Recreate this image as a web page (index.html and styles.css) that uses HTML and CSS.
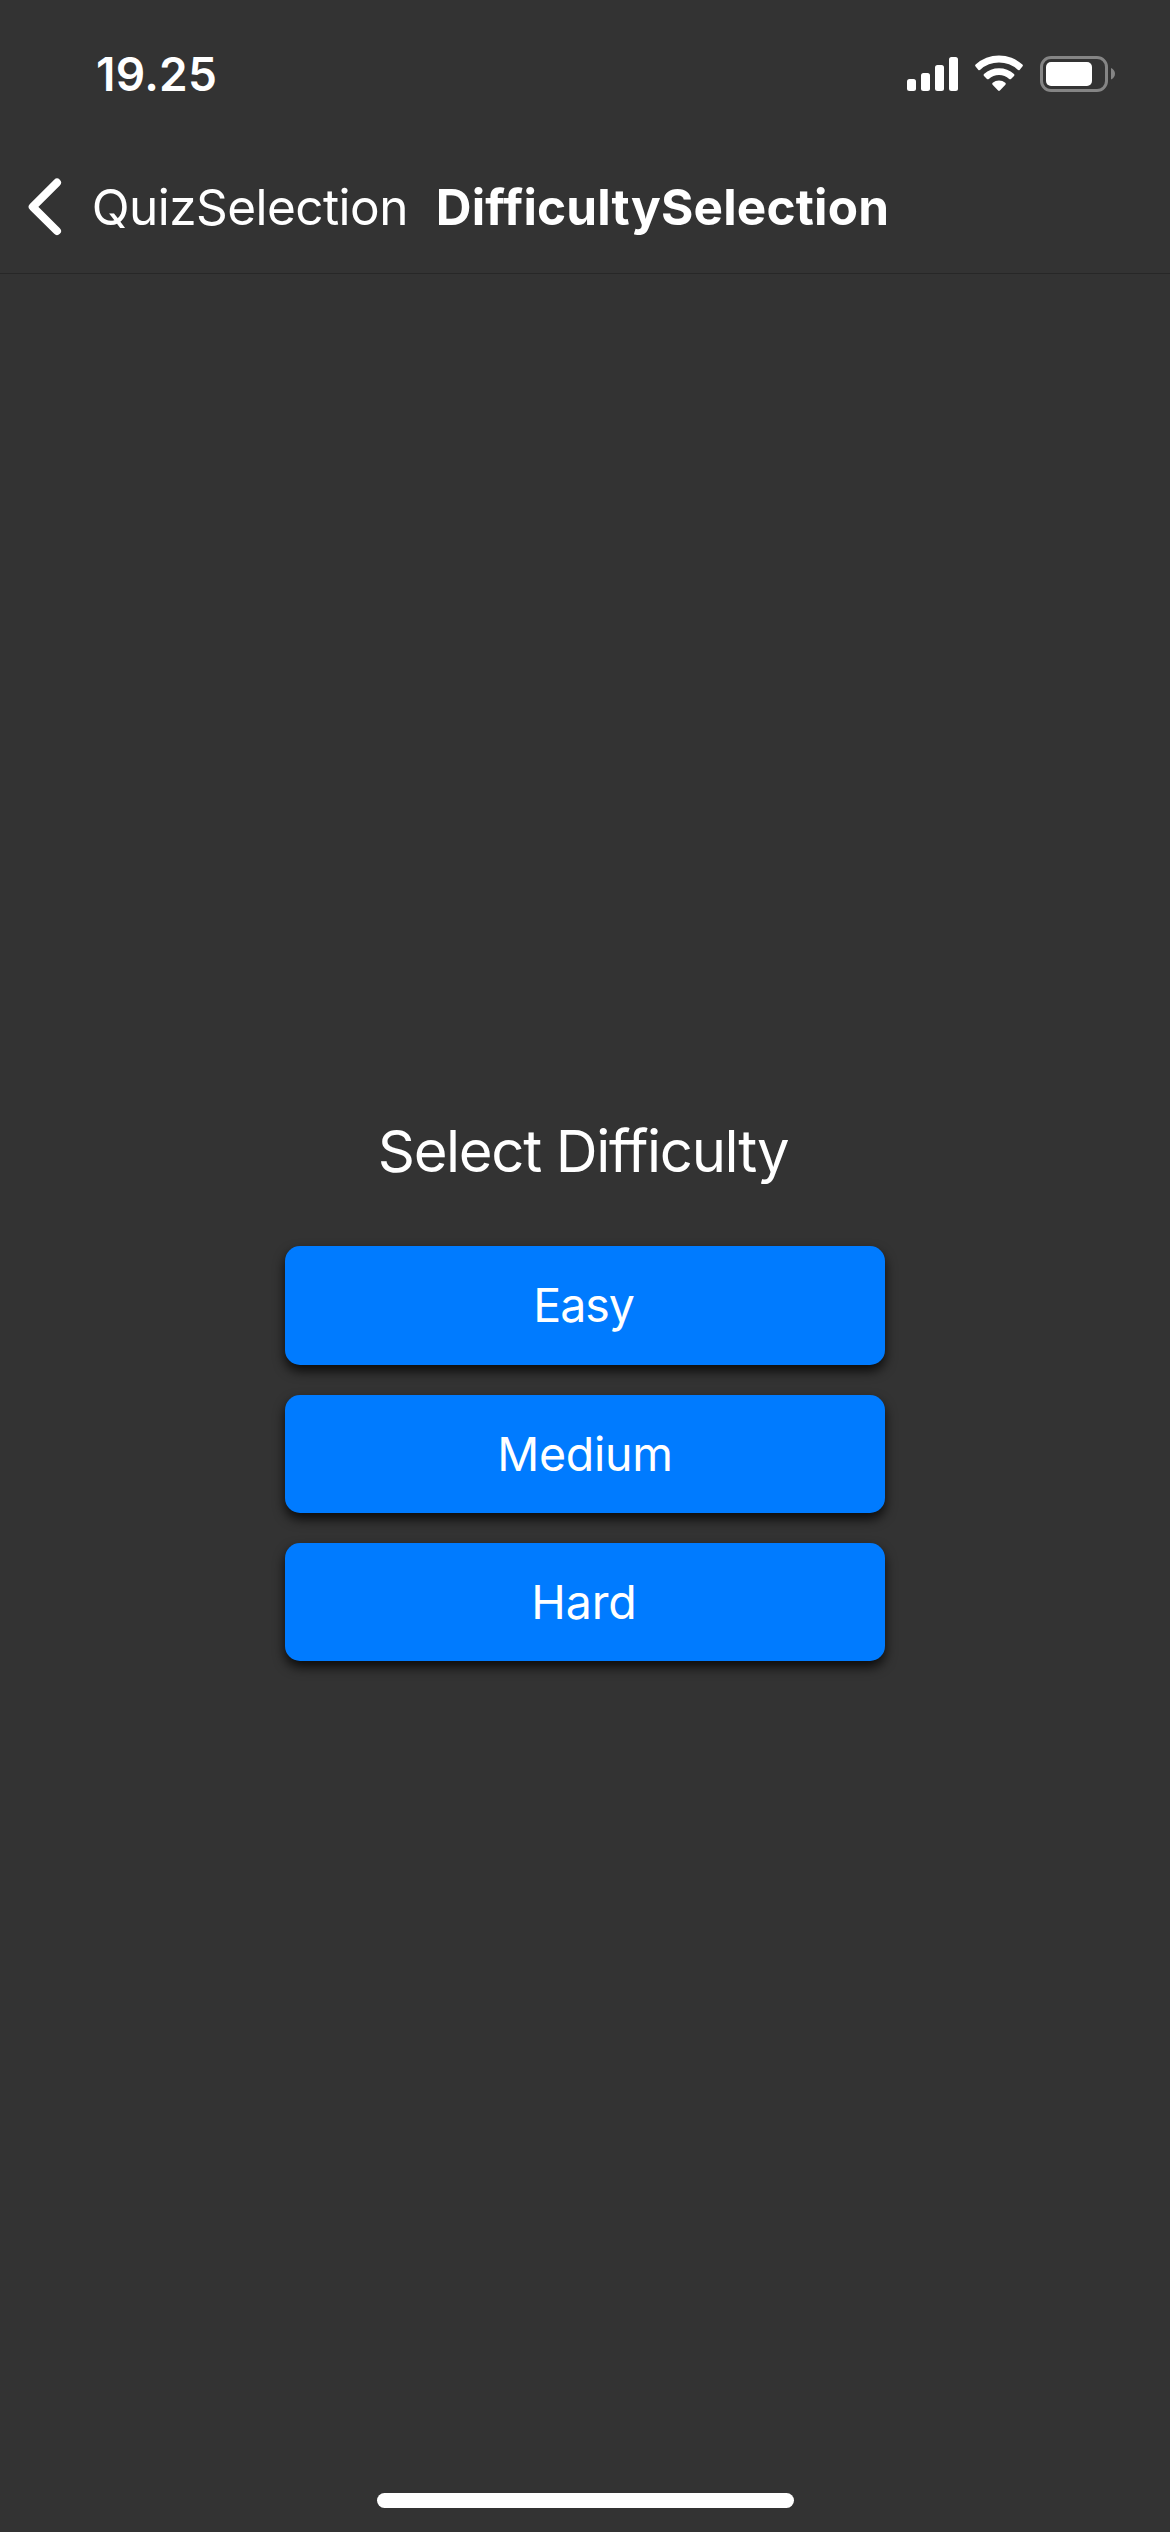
FILE: index.html
```html
<!DOCTYPE html>
<html lang="en">
<head>
<meta charset="utf-8">
<title>DifficultySelection</title>
<link rel="stylesheet" href="styles.css">
</head>
<body>
<div class="screen">
  <div class="status-bar">
    <span class="time">19.25</span>
    <svg class="status-icons" width="210" height="38" viewBox="0 0 210 38">
      <g fill="#fff">
        <rect x="2" y="24" width="9" height="12" rx="2.5"/>
        <rect x="16" y="18" width="9" height="18" rx="2.5"/>
        <rect x="30" y="10" width="9" height="26" rx="2.5"/>
        <rect x="44" y="2" width="9" height="34" rx="2.5"/>
      </g>
      <path fill="#fff" d="M70.600 9.600A34.500 34.500 0 0 1 117.400 9.600Q118.400 10.600 117.400 11.500L114.600 14.900Q113.700 15.700 112.700 14.800A27.500 27.500 0 0 0 75.300 14.800Q74.300 15.700 73.400 14.900L70.600 11.500Q69.600 10.600 70.600 9.600Z"/>
      <path fill="#fff" d="M79 18.900A22.500 22.500 0 0 1 109 18.900Q110 19.900 109 20.900L106 23.900Q105.200 24.700 104.200 23.900A15 15 0 0 0 83.800 23.900Q82.800 24.700 82 23.900L79 20.900Q78 19.900 79 18.900Z"/>
      <path fill="#fff" d="M87.700 27.800A10 10 0 0 1 100.300 27.800Q101.400 28.800 100.400 29.800L94.900 35.500Q94 36.400 93.100 35.500L87.600 29.800Q86.600 28.800 87.700 27.800Z"/>
      <rect x="136.500" y="2.500" width="65" height="33" rx="9.500" fill="none" stroke="#858585" stroke-width="3"/>
      <rect x="141" y="7" width="46" height="24" rx="5" fill="#fff"/>
      <path fill="#858585" d="M206 13Q210 15 210 18.800T206 24.600Z"/>
    </svg>
  </div>
  <div class="nav-bar">
    <svg class="back-icon" width="34" height="58" viewBox="0 0 34 58"><path d="M29 4.600 4.700 28.800 29 53" fill="none" stroke="#fff" stroke-width="8" stroke-linecap="round" stroke-linejoin="round"/></svg>
    <span class="back-label">QuizSelection</span>
    <span class="nav-title">DifficultySelection</span>
  </div>
  <div class="content">
    <div class="heading">Select Difficulty</div>
    <div class="option easy">Easy</div>
    <div class="option medium">Medium</div>
    <div class="option hard">Hard</div>
  </div>
  <div class="footer"><div class="home-indicator"></div></div>
</div>
</body>
</html>
```
FILE: styles.css
```css
* { box-sizing: border-box; }
body {
  margin: 0;
  background: #333;
  color: #fff;
  font-family: Inter, "Liberation Sans", sans-serif;
}
.screen {
  display: flex;
  flex-direction: column;
  width: 1170px;
  height: 2532px;
  background: #333;
}
.status-bar {
  display: flex;
  justify-content: space-between;
  align-items: flex-start;
  height: 141px;
  padding: 55px 55px 0 96px;
}
.time {
  font-size: 46px;
  font-weight: 600;
  line-height: 38px;
  letter-spacing: 0.27px;
}
.status-icons { display: block; }
.nav-bar {
  display: flex;
  align-items: center;
  height: 133px;
  padding-left: 28px;
  border-bottom: 1px solid #272727;
}
.back-icon { margin-bottom: 1px; }
.back-label {
  margin-left: 29.7px;
  font-size: 49.5px;
  letter-spacing: -0.55px;
}
.nav-title {
  margin-left: 28px;
  font-size: 49.5px;
  font-weight: 700;
  letter-spacing: 0.17px;
}
.content {
  display: flex;
  flex: 1;
  flex-direction: column;
  align-items: center;
  padding-top: 841px;
}
.heading {
  height: 72px;
  margin-bottom: 59px;
  padding-right: 4px;
  font-size: 58px;
  line-height: 72px;
  letter-spacing: -1.32px;
}
.option {
  display: flex;
  align-items: center;
  justify-content: center;
  width: 600px;
  height: 118px;
  margin-bottom: 30px;
  border-radius: 15px;
  background: #007bff;
  box-shadow: 0 6px 12px rgba(0, 0, 0, 0.8);
  font-size: 46.5px;
}
.easy {
  height: 119px;
  padding: 0 3px 1px 0;
  letter-spacing: -1.1px;
}
.medium { letter-spacing: -0.26px; }
.hard {
  padding-right: 2px;
  letter-spacing: -0.15px;
}
.footer {
  display: flex;
  justify-content: center;
  height: 39px;
}
.home-indicator {
  width: 417px;
  height: 15px;
  border-radius: 8px;
  background: #fff;
}
```
